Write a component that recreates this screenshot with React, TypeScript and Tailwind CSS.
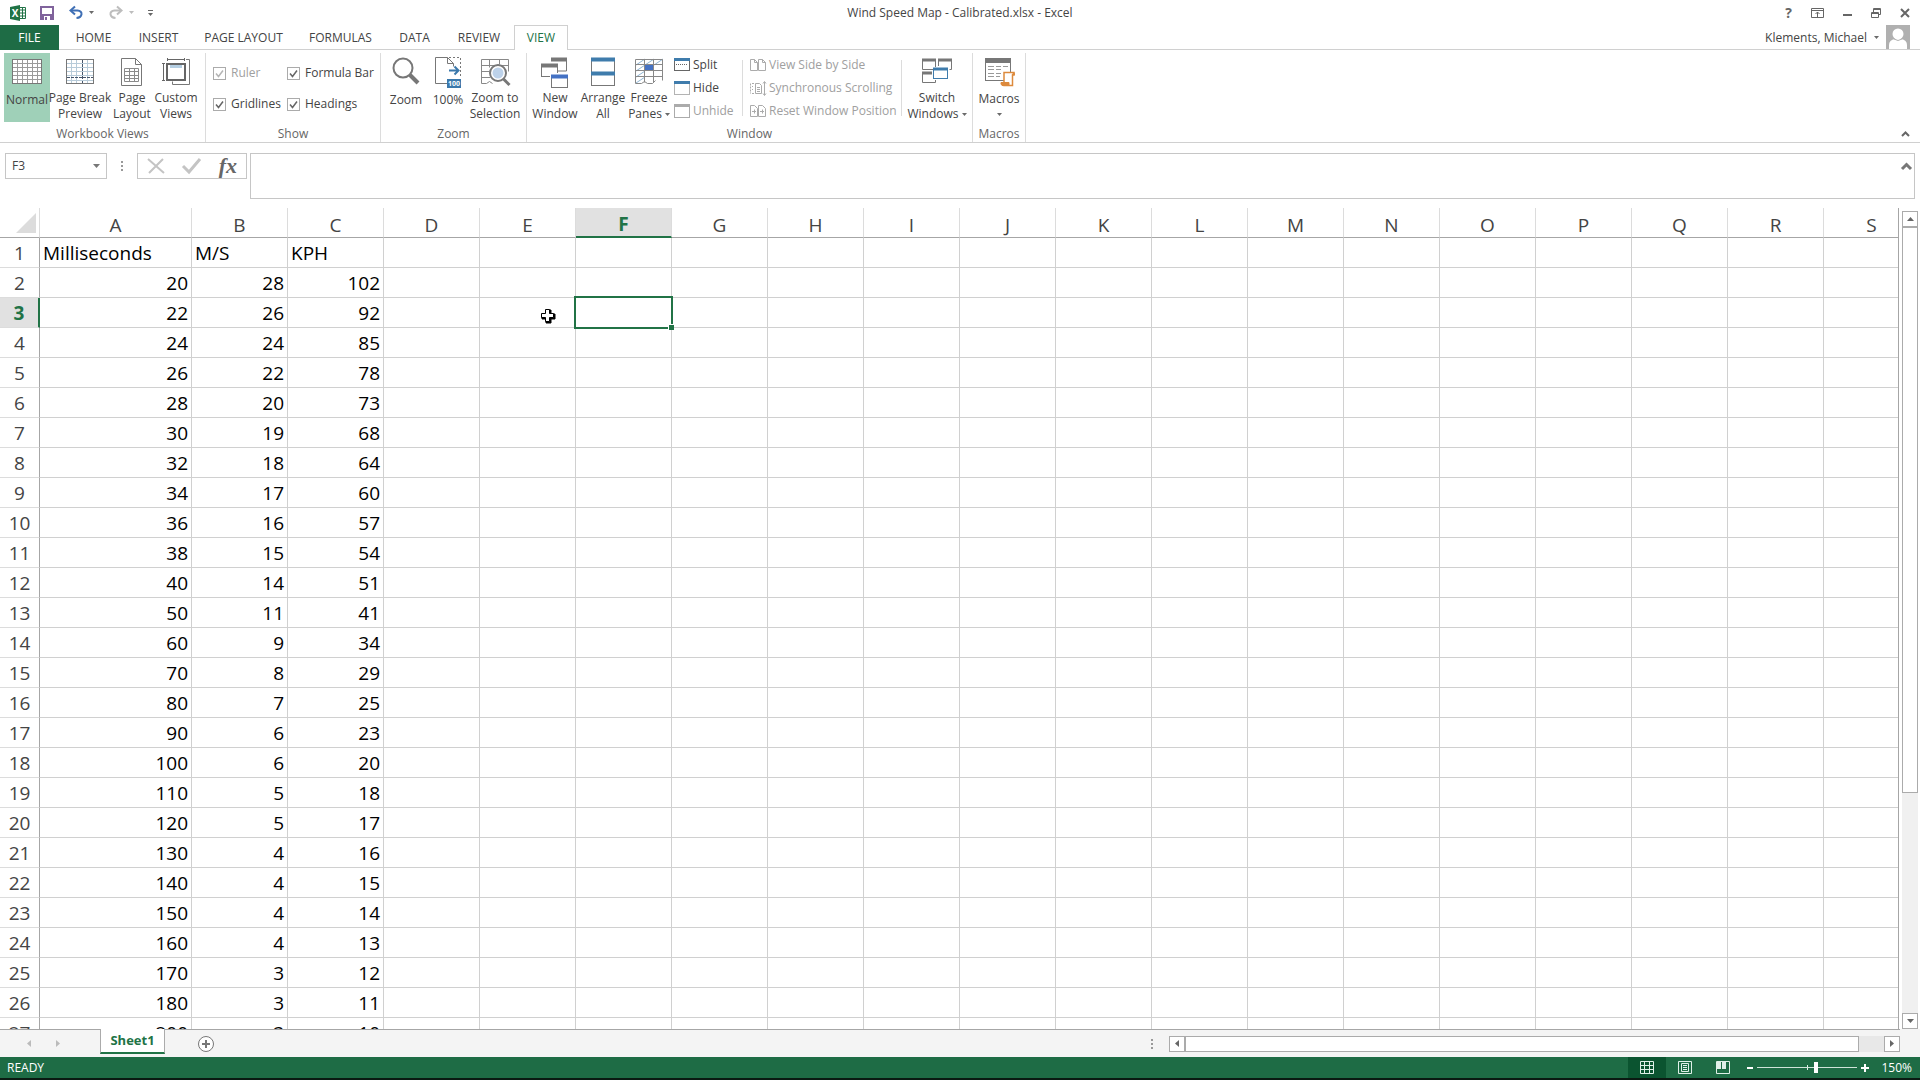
import React, { useState } from 'react';

const COLUMNS = ['A', 'B', 'C', 'D', 'E', 'F', 'G', 'H', 'I', 'J', 'K', 'L', 'M', 'N', 'O', 'P', 'Q', 'R', 'S'];

const ROWS: (string | number)[][] = [
  ['Milliseconds', 'M/S', 'KPH'],
  [20, 28, 102],
  [22, 26, 92],
  [24, 24, 85],
  [26, 22, 78],
  [28, 20, 73],
  [30, 19, 68],
  [32, 18, 64],
  [34, 17, 60],
  [36, 16, 57],
  [38, 15, 54],
  [40, 14, 51],
  [50, 11, 41],
  [60, 9, 34],
  [70, 8, 29],
  [80, 7, 25],
  [90, 6, 23],
  [100, 6, 20],
  [110, 5, 18],
  [120, 5, 17],
  [130, 4, 16],
  [140, 4, 15],
  [150, 4, 14],
  [160, 4, 13],
  [170, 3, 12],
  [180, 3, 11],
  [200, 3, 10],
];

const TABS = [
  { name: 'HOME', width: 'w-[65px]' },
  { name: 'INSERT', width: 'w-[65px]' },
  { name: 'PAGE LAYOUT', width: 'w-[105px]' },
  { name: 'FORMULAS', width: 'w-[89px]' },
  { name: 'DATA', width: 'w-[59px]' },
  { name: 'REVIEW', width: 'w-[70px]' },
];

type IconProps = { w: number; h: number; children: React.ReactNode; className?: string };

const Svg: React.FC<IconProps> = ({ w, h, children, className = '' }) => (
  <svg width={w} height={h} viewBox={`0 0 ${w} ${h}`} fill="none" className={`overflow-visible ${className}`} aria-hidden="true">
    {children}
  </svg>
);

const Caret: React.FC<{ color?: string }> = ({ color = '#6a6a6a' }) => (
  <Svg w={5} h={3} className="inline-block shrink-0">
    <path d="M0 0h5L2.5 3z" fill={color} />
  </Svg>
);

/* ---------- ribbon icons, 32px tall ---------- */

const NormalIcon = () => (
  <Svg w={32} h={32}>
    <rect x="1.5" y="4.5" width="29" height="24" fill="#fff" stroke="#777" />
    <path d="M6.5 5v23M11.5 5v23M16.5 5v23M21.5 5v23M26.5 5v23M2 8.5h28M2 12.5h28M2 16.5h28M2 20.5h28M2 24.5h28" stroke="#9a9a9a" />
  </Svg>
);

const PageBreakIcon = () => (
  <Svg w={32} h={32}>
    <rect x="2.5" y="4.5" width="27" height="24" fill="#fff" stroke="#777" />
    <path d="M7.5 5v23M12.5 5v23M23.5 5v23M3 8.5h26M3 12.5h26M3 16.5h26M3 20.5h26" stroke="#b7cbd9" />
    <path d="M18.5 5v23M3 22.5h26" stroke="#44546a" strokeDasharray="3 1" />
    <path d="M3 25.5h26" stroke="#b7cbd9" />
  </Svg>
);

const PageLayoutIcon = () => (
  <Svg w={32} h={32}>
    <path d="M5.5 3.5h14l6 6v21h-20z" fill="#fff" stroke="#777" />
    <path d="M19.5 3.5v6h6" stroke="#777" />
    <path d="M8.500 13.5h14v13h-14zM8.500 16.5h14M8.500 20.5h14M8.500 23.5h14M13.5 13v13M18.5 13v13" stroke="#8a8a8a" />
  </Svg>
);

const CustomViewsIcon = () => (
  <Svg w={32} h={32}>
    <path d="M7 4.500h18M7.500 3v3M24.500 3v3M3.500 8v18M2 8.500h3M2 25.500h3" stroke="#666" />
    <path d="M26 4.500h3.500v25h-17v-3" stroke="#777" />
    <rect x="7" y="9" width="18" height="16" fill="#fff" stroke="#666" strokeWidth="2" />
    <path d="M10 11.500h12" stroke="#b5cfe3" strokeWidth="3" />
  </Svg>
);

const ZoomIcon = () => (
  <Svg w={32} h={32}>
    <circle cx="13" cy="13" r="9.500" stroke="#777" strokeWidth="2" />
    <path d="M20 20l8 8" stroke="#777" strokeWidth="4" />
  </Svg>
);

const HundredIcon = () => (
  <Svg w={32} h={32}>
    <path d="M15 28.500H3.500v-26h12l6 6" stroke="#777" />
    <path d="M15.500 2.500v6h6v3" stroke="#777" />
    <path d="M17 2.500h11.500V23" stroke="#777" strokeDasharray="2 2" />
    <path d="M17 15.500h9M22.500 11.500l4 4-4 4" stroke="#3b78ab" strokeWidth="2" />
    <rect x="15" y="24" width="14" height="9" fill="#3b78ab" />
    <text x="22" y="31" fill="#fff" fontSize="7" fontWeight="700" textAnchor="middle" fontFamily="Open Sans, sans-serif">100</text>
  </Svg>
);

const ZoomSelectionIcon = () => (
  <Svg w={32} h={32}>
    <path d="M2.500 4.500h27v12M2.500 4.500v24h5l3-2 3 2M2.500 10.500h27M2.500 16.500h8M2.500 22.500h9M10.500 4.500v8M20.500 4.500v5" stroke="#888" />
    <circle cx="19" cy="18" r="8" fill="#fff" stroke="#777" strokeWidth="2" />
    <circle cx="19" cy="18" r="5.500" fill="#bdd2ea" />
    <path d="M24.500 24l6 6" stroke="#777" strokeWidth="3" />
  </Svg>
);

const NewWindowIcon = () => (
  <Svg w={32} h={32}>
    <path d="M12 4.500h16" stroke="#777" strokeWidth="4" />
    <path d="M27.500 5v11h-9" stroke="#777" />
    <rect x="2.500" y="9.500" width="16" height="12" fill="#fff" stroke="#777" />
    <path d="M2 10.500h17" stroke="#777" strokeWidth="4" />
    <rect x="11" y="18" width="19" height="16" fill="#fff" />
    <rect x="12.500" y="20.500" width="16" height="12" fill="#fff" stroke="#777" />
    <path d="M12 21.500h17" stroke="#4472c4" strokeWidth="4" />
  </Svg>
);

const ArrangeIcon = () => (
  <Svg w={32} h={32}>
    <rect x="4.500" y="3.500" width="23" height="27" fill="#fff" stroke="#777" />
    <path d="M4 4.500h24M4 18.500h24" stroke="#3f7cac" strokeWidth="4" />
  </Svg>
);

const FreezeIcon = () => (
  <Svg w={32} h={32}>
    <path d="M3 10l9-6M12 10l9-6M21 10l9-6M3 16l9-6M3 22l9-6M3 28l9-6" stroke="#8db4d3" />
    <path d="M2.500 4.500h27v21M2.500 4.500v24h6l3-2 3 2h5l3-3M2.500 9.500h27M2.500 15.500h27M2.500 21.500h27M11.500 4.500v23M20.500 4.500v23" stroke="#888" />
    <rect x="12" y="10" width="8" height="5" fill="#4472c4" />
  </Svg>
);

const SwitchIcon = () => (
  <Svg w={32} h={32}>
    <path d="M1 5h14M17 5h14M1 18h10" stroke="#777" strokeWidth="3" />
    <path d="M1.500 5v9.500h11M14.500 5v7M17.500 5v6M30.500 5v9.500h-2M1.500 18v9.500h13V25" stroke="#777" />
    <rect x="12.500" y="13.500" width="14" height="10" fill="#fff" stroke="#3f7cac" />
    <path d="M12 14h15" stroke="#3f7cac" strokeWidth="3" />
  </Svg>
);

const MacrosIcon = () => (
  <Svg w={32} h={32}>
    <rect x="2.500" y="4.500" width="25" height="21" fill="#fff" stroke="#777" />
    <path d="M2 5.500h26" stroke="#777" strokeWidth="5" />
    <path d="M5 11.500h6M13 11.500h5M20 11.500h5M5 14.500h6M13 14.500h5M5 18.500h6M13 18.500h5M5 21.500h6M13 21.500h4" stroke="#999" />
    <path d="M21 28V17.500h10V20h-1.500v10.500H21z" fill="#fff" stroke="#dd8a3c" strokeWidth="1.500" />
    <path d="M18 27.500h8v3h-7q-1.500-1.500-1-3z" fill="#dd8a3c" stroke="#dd8a3c" />
    <path d="M30 17q2 0 2 3h-3z" fill="#dd8a3c" />
  </Svg>
);

/* ---------- ribbon building blocks ---------- */

type BigButtonProps = { icon: React.ReactNode; lines: string[]; width: string; caret?: boolean; active?: boolean };

const BigButton: React.FC<BigButtonProps> = ({ icon, lines, width, caret, active }) => (
  <button className={`flex h-[69px] shrink-0 flex-col items-center pt-0.5 leading-4 whitespace-nowrap ${width} ${active ? 'bg-[#9fd0b8]' : ''}`}>
    <span className="h-[37px]">{icon}</span>
    {lines.map((line, i) => (
      <span key={line} className="flex items-center gap-[3px]">
        {line}
        {caret && i === 1 && <Caret />}
      </span>
    ))}
    {caret && lines.length === 1 && <span className="flex h-4 items-center"><Caret /></span>}
  </button>
);

const Group: React.FC<{ label: string; width: string; children: React.ReactNode }> = ({ label, width, children }) => (
  <section className={`flex shrink-0 flex-col border-r border-[#dcdcdc] ${width}`}>
    <div className="flex h-[73px] items-start">{children}</div>
    <h2 className="text-center leading-4 text-[#666]">{label}</h2>
  </section>
);

const Check: React.FC<{ label: string; checked?: boolean; disabled?: boolean }> = ({ label, checked, disabled }) => (
  <label className={`flex items-center gap-[5px] leading-4 whitespace-nowrap ${disabled ? 'text-[#a0a0a0]' : ''}`}>
    <span className="relative flex h-[13px] w-[13px] shrink-0">
      <input
        type="checkbox"
        defaultChecked={checked}
        disabled={disabled}
        className="peer h-[13px] w-[13px] appearance-none border border-[#ababab] bg-white"
      />
      <Svg w={13} h={13} className="pointer-events-none absolute inset-0 hidden peer-checked:block">
        <path d="M3 6.500l2.500 3L10 3.500" stroke={disabled ? '#b5b5b5' : '#666'} strokeWidth="1.500" />
      </Svg>
    </span>
    {label}
  </label>
);

const SmallButton: React.FC<{ icon: React.ReactNode; label: string; disabled?: boolean }> = ({ icon, label, disabled }) => (
  <button disabled={disabled} className={`flex h-[23px] items-center gap-[3px] whitespace-nowrap ${disabled ? 'text-[#a0a0a0]' : ''}`}>
    {icon}
    {label}
  </button>
);

const Ribbon = () => (
  <div className="flex h-[93px] shrink-0 border-b border-[#d0d0d0] pt-[3px]">
    <Group label="Workbook Views" width="w-[206px]">
      <div className="flex pl-1">
        <BigButton icon={<NormalIcon />} lines={['Normal']} width="w-[46px]" active />
        <BigButton icon={<PageBreakIcon />} lines={['Page Break', 'Preview']} width="w-[60px]" />
        <BigButton icon={<PageLayoutIcon />} lines={['Page', 'Layout']} width="w-11" />
        <BigButton icon={<CustomViewsIcon />} lines={['Custom', 'Views']} width="w-11" />
      </div>
    </Group>
    <Group label="Show" width="w-[175px]">
      <div className="grid grid-cols-[74px_1fr] gap-y-[15px] pt-3 pl-[7px]">
        <Check label="Ruler" checked disabled />
        <Check label="Formula Bar" checked />
        <Check label="Gridlines" checked />
        <Check label="Headings" checked />
      </div>
    </Group>
    <Group label="Zoom" width="w-[146px]">
      <div className="flex pl-1">
        <BigButton icon={<ZoomIcon />} lines={['Zoom']} width="w-[42px]" />
        <BigButton icon={<HundredIcon />} lines={['100%']} width="w-[42px]" />
        <BigButton icon={<ZoomSelectionIcon />} lines={['Zoom to', 'Selection']} width="w-[52px]" />
      </div>
    </Group>
    <Group label="Window" width="w-[446px]">
      <div className="flex pl-1">
        <BigButton icon={<NewWindowIcon />} lines={['New', 'Window']} width="w-12" />
        <BigButton icon={<ArrangeIcon />} lines={['Arrange', 'All']} width="w-12" />
        <BigButton icon={<FreezeIcon />} lines={['Freeze', 'Panes']} width="w-[44px]" caret />
      </div>
      <div className="flex w-[71px] shrink-0 flex-col pl-[3px]">
        <SmallButton
          label="Split"
          icon={
            <Svg w={16} h={13}>
              <rect x=".5" y=".5" width="15" height="12" stroke="#666" />
              <path d="M0 1.500h16" stroke="#3f7cac" strokeWidth="3" />
              <path d="M2 6.500h12" stroke="#666" strokeDasharray="1 1" />
            </Svg>
          }
        />
        <SmallButton
          label="Hide"
          icon={
            <Svg w={16} h={14}>
              <rect x=".5" y=".5" width="15" height="13" stroke="#666" strokeDasharray="1 1" />
              <path d="M0 1.500h16" stroke="#3f7cac" strokeWidth="3" />
            </Svg>
          }
        />
        <SmallButton
          label="Unhide"
          disabled
          icon={
            <Svg w={16} h={14}>
              <rect x=".5" y=".5" width="15" height="13" stroke="#ababab" />
              <path d="M0 1.500h16" stroke="#ababab" strokeWidth="3" />
            </Svg>
          }
        />
      </div>
      <div className="mt-[7px] flex h-14 w-[160px] shrink-0 items-center border-x border-[#dcdcdc] pl-[7px]">
        <div className="flex flex-col">
          <SmallButton
            label="View Side by Side"
            disabled
            icon={
              <Svg w={16} h={12}>
                <path d="M.5.500h4l3 3v8h-7zM8.500.500h4l3 3v8h-7zM4.500.500v3h3M12.500.500v3h3" stroke="#ababab" />
              </Svg>
            }
          />
          <SmallButton
            label="Synchronous Scrolling"
            disabled
            icon={
              <Svg w={16} h={15}>
                <path d="M.5 2.500v10M2 2.500h2M2 12.500h2M2 5.500h1M2 8.500h1" stroke="#ababab" strokeDasharray="2 1" />
                <path d="M5.500 2.500h4l2 2v8h-6zM7 6.500h3M7 8.500h3M7 10.500h3M14.500 1v13M13 2.500l1.500-2 1.500 2M13 12.500l1.500 2 1.500-2" stroke="#ababab" />
              </Svg>
            }
          />
          <SmallButton
            label="Reset Window Position"
            disabled
            icon={
              <Svg w={16} h={12}>
                <path d="M.5.500h4l3 3v8h-7zM8.500.500h4l3 3v8h-7zM2 6.500h4M4.500 4.500v4M10 6.500h4M12.500 4.500v4" stroke="#ababab" />
              </Svg>
            }
          />
        </div>
      </div>
      <BigButton icon={<SwitchIcon />} lines={['Switch', 'Windows']} width="w-[70px]" caret />
    </Group>
    <Group label="Macros" width="w-[53px]">
      <BigButton icon={<MacrosIcon />} lines={['Macros']} width="w-[52px]" caret />
    </Group>
    <button aria-label="Collapse the Ribbon" className="mt-auto mr-2.5 mb-[5px] ml-auto">
      <Svg w={9} h={6}>
        <path d="M1 5l3.500-3.500L8 5" stroke="#666" strokeWidth="2" />
      </Svg>
    </button>
  </div>
);

const TitleBar = () => (
  <header className="grid h-[25px] shrink-0 grid-cols-[1fr_auto_1fr] items-center">
    <div className="flex items-center pl-2.5">
      <Svg w={16} h={16}>
        <path d="M10 2.500h5.500v11H10" fill="#fff" stroke="#217346" />
        <path d="M10 5h5M10 8h5M10 11h5M12.500 3v10" stroke="#217346" />
        <path d="M0 2l10-2v16L0 14z" fill="#217346" />
        <text x="5" y="12" fill="#fff" fontSize="10" fontWeight="700" textAnchor="middle" fontFamily="Open Sans, sans-serif">X</text>
      </Svg>
      <button aria-label="Save" className="ml-3.5">
        <Svg w={14} h={14}>
          <path d="M1 1h12v12H1z" stroke="#80639c" strokeWidth="2" />
          <path d="M0 8h14v6H0z" fill="#80639c" />
          <rect x="4" y="10" width="6" height="4" fill="#fff" />
          <rect x="5" y="11" width="2" height="3" fill="#80639c" />
        </Svg>
      </button>
      <button aria-label="Undo" className="ml-[15px] flex items-center gap-1.5">
        <Svg w={14} h={13}>
          <path d="M2 4.500h6.500c6 .5 5 7-1 7.500" stroke="#3f6fb5" strokeWidth="2" />
          <path d="M6 .5l-4.500 4 4.500 4" stroke="#3f6fb5" strokeWidth="2" />
        </Svg>
        <Caret />
      </button>
      <button aria-label="Redo" disabled className="ml-[15px] flex items-center gap-1.5">
        <Svg w={14} h={13}>
          <path d="M12 4.500H5.500c-6 .5-5 7 1 7.500" stroke="#bdbdbd" strokeWidth="2" />
          <path d="M8 .5l4.500 4-4.500 4" stroke="#bdbdbd" strokeWidth="2" />
        </Svg>
        <Caret color="#bdbdbd" />
      </button>
      <button aria-label="Customize Quick Access Toolbar" className="ml-3.5">
        <Svg w={5} h={6}>
          <path d="M0 .5h5" stroke="#666" />
          <path d="M0 3h5L2.500 6z" fill="#666" />
        </Svg>
      </button>
    </div>
    <h1>Wind Speed Map - Calibrated.xlsx - Excel</h1>
    <div className="flex items-center justify-end gap-[19px] pr-2.5">
      <button aria-label="Help" className="text-sm font-bold text-[#666]">?</button>
      <button aria-label="Ribbon Display Options">
        <Svg w={13} h={10}>
          <path d="M.5.500h12v9H.5zM0 2.500h13M6.500 4v5M4.500 6l2-2 2 2" stroke="#666" />
        </Svg>
      </button>
      <button aria-label="Minimize">
        <Svg w={9} h={6}>
          <path d="M0 5h9" stroke="#666" strokeWidth="2" />
        </Svg>
      </button>
      <button aria-label="Restore Down">
        <Svg w={10} h={10}>
          <path d="M.5 4.500h7v5h-7zM.5 5.500h7M2.500 4V.500h7v6H8M2.500 1.500h7" stroke="#666" />
        </Svg>
      </button>
      <button aria-label="Close">
        <Svg w={10} h={10}>
          <path d="M1 1l8 8M9 1L1 9" stroke="#666" strokeWidth="2" />
        </Svg>
      </button>
    </div>
  </header>
);

const TabBar = () => (
  <nav className="relative flex h-[25px] shrink-0 items-stretch">
    <div className="absolute inset-x-0 bottom-0 h-px bg-[#d0d0d0]"></div>
    <button className="relative mr-0.5 w-[59px] bg-[#1e6c45] text-white">FILE</button>
    {TABS.map((tab) => (
      <button key={tab.name} className={tab.width}>{tab.name}</button>
    ))}
    <button className="relative w-[54px] border-x border-t border-[#d0d0d0] bg-white text-[#217346]">VIEW</button>
    <button className="mr-[7px] ml-auto flex items-center gap-[7px] text-[#444]">
      Klements, Michael <Caret />
    </button>
    <Svg w={24} h={24} className="mr-2.5 bg-[#b0b0b0]">
      <circle cx="12" cy="9" r="5.500" fill="#fff" />
      <path d="M3 24v-4q0-5 6-6h6q6 1 6 6v4z" fill="#fff" />
      <path d="M8 14q4 3 8 0" stroke="#b0b0b0" />
    </Svg>
  </nav>
);

const FormulaBar: React.FC<{ cell: string }> = ({ cell }) => (
  <div className="flex h-[65px] shrink-0 items-start pt-2.5 pr-[5px] pl-[5px]">
    <div className="flex h-[26px] w-[102px] shrink-0 items-center border border-[#c6c6c6] pr-1.5 pl-1.5">
      <input aria-label="Name Box" defaultValue={cell} className="w-full min-w-0 text-[#444] outline-none" />
      <button aria-label="Open name list">
        <Svg w={7} h={4}>
          <path d="M0 0h7L3.500 4z" fill="#777" />
        </Svg>
      </button>
    </div>
    <Svg w={30} h={26} className="shrink-0">
      <path d="M15 8v11" stroke="#999" strokeWidth="2" strokeDasharray="2 2" />
    </Svg>
    <div className="mr-[3px] flex h-[26px] w-[110px] shrink-0 items-center justify-between border border-[#c6c6c6] px-[9px]">
      <button aria-label="Cancel" disabled>
        <Svg w={18} h={18}>
          <path d="M1 2l16 14M16 2L2 16" stroke="#c4c4c4" strokeWidth="2" />
        </Svg>
      </button>
      <button aria-label="Enter" disabled>
        <Svg w={19} h={16}>
          <path d="M1 8l6 6L18 1" stroke="#c4c4c4" strokeWidth="3" />
        </Svg>
      </button>
      <button aria-label="Insert Function" className="font-['Liberation_Serif',serif] text-[22px] leading-6 font-bold text-[#666] italic">fx</button>
    </div>
    <div className="flex h-[46px] flex-1 items-start border border-[#c6c6c6]">
      <textarea aria-label="Formula Bar" className="h-full flex-1 resize-none px-1 outline-none"></textarea>
      <button aria-label="Collapse Formula Bar" className="mt-2 mr-0.5">
        <Svg w={11} h={8}>
          <path d="M1 7l4.500-4.500L10 7" stroke="#777" strokeWidth="3" />
        </Svg>
      </button>
    </div>
  </div>
);

const Cursor = () => (
  <Svg w={16} h={16} className="absolute top-2.5 left-[60px] z-10">
    <path d="M6 2h5v4h4v5h-4v4H6v-4H2V6h4z" fill="#000" stroke="#000" />
    <path d="M5.500 1.500h4v4h4v4h-4v4h-4v-4h-4v-4h4z" fill="#fff" stroke="#000" />
  </Svg>
);

const Grid: React.FC<{ column: number; row: number }> = ({ column, row }) => (
  <div className="min-w-0 flex-1 overflow-hidden border-r border-[#a6a6a6]">
    <table className="w-px table-fixed border-separate border-spacing-0 text-[19px] leading-6 text-black">
      <colgroup>
        <col className="w-10" />
        {COLUMNS.map((name) => (
          <col key={name} className={name === 'A' ? 'w-[152px]' : 'w-24'} />
        ))}
      </colgroup>
      <thead className="text-[#444]">
        <tr className="h-[30px]">
          <td className="border-r border-b border-r-[#dcdcdc] border-b-[#a6a6a6] p-0">
            <button aria-label="Select All" className="ml-4 block">
              <Svg w={20} h={20}>
                <path d="M20 0v20H0z" fill="#dcdcdc" />
              </Svg>
            </button>
          </td>
          {COLUMNS.map((name, c) => (
            <th
              key={name}
              scope="col"
              className={`border-r border-r-[#dcdcdc] p-0 pt-1 ${
                c === column
                  ? 'border-b-2 border-b-[#217346] bg-[#e1e1e1] font-bold text-[#217346]'
                  : 'border-b border-b-[#a6a6a6] font-normal'
              }`}
            >
              {name}
            </th>
          ))}
        </tr>
      </thead>
      <tbody>
        {ROWS.map((values, r) => (
          <tr key={r} className="h-[30px]">
            <th
              scope="row"
              className={`border-b border-b-[#dcdcdc] p-0 ${
                r === row
                  ? 'border-r-2 border-r-[#217346] bg-[#e1e1e1] font-bold text-[#217346]'
                  : 'border-r border-r-[#a6a6a6] font-normal text-[#444]'
              }`}
            >
              {r + 1}
            </th>
            {COLUMNS.map((name, c) => (
              <td
                key={name}
                className={`relative border-r border-b border-[#d0d0d0] px-[3px] py-0 whitespace-nowrap ${r === 0 ? 'text-left' : 'text-right'}`}
              >
                {values[c]}
                {r === row && c === column && (
                  <div className="absolute -inset-0.5 z-10 border-2 border-[#217346]">
                    <div className="absolute -right-[3px] -bottom-[3px] h-1.5 w-1.5 border-t border-l border-white bg-[#217346]"></div>
                  </div>
                )}
                {r === row && c === column - 1 && <Cursor />}
              </td>
            ))}
          </tr>
        ))}
      </tbody>
    </table>
  </div>
);

const arrowButton = 'flex h-4 w-4 shrink-0 items-center justify-center border border-[#ababab] bg-white';

const VerticalScroll = () => (
  <div className="mt-[3px] mr-0.5 ml-[3px] flex w-4 shrink-0 flex-col bg-[#f0f0f0]">
    <button aria-label="Scroll up" className={arrowButton}>
      <Svg w={7} h={4}><path d="M3.500 0L7 4H0z" fill="#666" /></Svg>
    </button>
    <div className="flex-1">
      <div className="h-[72%] border border-[#ababab] bg-white"></div>
    </div>
    <button aria-label="Scroll down" className={arrowButton}>
      <Svg w={7} h={4}><path d="M0 0h7L3.500 4z" fill="#666" /></Svg>
    </button>
  </div>
);

const SheetBar = () => (
  <div className="flex h-7 shrink-0 items-center bg-[#f4f4f4]">
    <div className="flex h-full min-w-0 flex-1 items-center border-t border-[#a6a6a6]">
      <button aria-label="Previous sheet" className="ml-[27px]">
        <Svg w={4} h={7}><path d="M4 0v7L0 3.500z" fill="#bbb" /></Svg>
      </button>
      <button aria-label="Next sheet" className="ml-[25px]">
        <Svg w={4} h={7}><path d="M0 0v7l4-3.500z" fill="#bbb" /></Svg>
      </button>
      <button className="-mt-px ml-10 h-[25px] w-[65px] shrink-0 self-start border-x border-b-2 border-x-[#ababab] border-b-[#217346] bg-white text-[13px] font-bold text-[#217346]">
        Sheet1
      </button>
      <button aria-label="New sheet" className="ml-[33px]">
        <Svg w={16} h={16}>
          <circle cx="8" cy="8" r="7.500" fill="#fff" stroke="#777" />
          <path d="M8 4v8M4 8h8" stroke="#777" strokeWidth="2" />
        </Svg>
      </button>
      <Svg w={2} h={10} className="mr-4 ml-auto">
        <path d="M1 0v10" stroke="#999" strokeWidth="2" strokeDasharray="2 2" />
      </Svg>
      <div className="flex w-[731px] shrink-0 bg-[#e8e8e8]">
        <button aria-label="Scroll left" className={arrowButton}>
          <Svg w={4} h={7}><path d="M4 0v7L0 3.500z" fill="#666" /></Svg>
        </button>
        <div className="flex-1 pr-[25px]">
          <div className="h-4 border border-[#ababab] bg-white"></div>
        </div>
        <button aria-label="Scroll right" className={arrowButton}>
          <Svg w={4} h={7}><path d="M0 0v7l4-3.500z" fill="#666" /></Svg>
        </button>
      </div>
    </div>
    <div className="w-5 shrink-0"></div>
  </div>
);

const StatusBar = () => {
  const [zoom, setZoom] = useState(59);
  return (
    <footer className="flex h-[23px] shrink-0 items-center border-b-2 border-[#0a1a12] bg-[#1e6c45] pl-[7px] text-white">
      READY
      <div className="ml-auto flex h-full items-center">
        <button aria-label="Normal" className="flex h-full w-[38px] items-center justify-center bg-[#0b5430]">
          <Svg w={14} h={13}>
            <path d="M.5.500h13v12H.5zM4.500 0v13M9.500 0v13M0 4.500h14M0 8.500h14" stroke="#e0f0e8" />
          </Svg>
        </button>
        <button aria-label="Page Layout" className="flex h-full w-[38px] items-center justify-center">
          <Svg w={14} h={13}>
            <path d="M.5.500h13v12H.5zM3.500 2.500h7v8h-7zM5 4.500h4M5 6.500h4M5 8.500h4" stroke="#e0f0e8" />
          </Svg>
        </button>
        <button aria-label="Page Break Preview" className="flex h-full w-[38px] items-center justify-center">
          <Svg w={14} h={13}>
            <path d="M.5.500h13v12H.5z" stroke="#e0f0e8" />
            <path d="M1 0h4v8H1zM6 0h4v8H6z" fill="#e0f0e8" />
          </Svg>
        </button>
        <button aria-label="Zoom Out" className="ml-[5px]">
          <Svg w={6} h={2}><path d="M0 1h6" stroke="#fff" strokeWidth="2" /></Svg>
        </button>
        <div className="relative mx-1 flex h-full w-[100px] items-center">
          <div className="absolute left-1/2 h-[5px] w-px bg-[#e0f0e8]"></div>
          <input
            type="range"
            aria-label="Zoom"
            value={zoom}
            onChange={(e) => setZoom(Number(e.target.value))}
            className="relative h-[11px] w-full appearance-none bg-transparent bg-[linear-gradient(#cfe3d8,#cfe3d8)] bg-[length:100%_1px] bg-center bg-no-repeat [&::-webkit-slider-thumb]:h-[11px] [&::-webkit-slider-thumb]:w-1 [&::-webkit-slider-thumb]:appearance-none [&::-webkit-slider-thumb]:bg-white"
          />
        </div>
        <button aria-label="Zoom In">
          <Svg w={8} h={8}><path d="M4 0v8M0 4h8" stroke="#fff" strokeWidth="2" /></Svg>
        </button>
        <button className="w-[51px] pr-2 text-right">150%</button>
      </div>
    </footer>
  );
};

const App: React.FC = () => {
  return (
    <div className="flex h-screen flex-col overflow-hidden bg-white font-['Open_Sans',sans-serif] text-xs text-[#444]">
      <TitleBar />
      <TabBar />
      <Ribbon />
      <FormulaBar cell="F3" />
      <div className="flex min-h-0 flex-1">
        <Grid column={5} row={2} />
        <VerticalScroll />
      </div>
      <SheetBar />
      <StatusBar />
    </div>
  );
};

export default App;
